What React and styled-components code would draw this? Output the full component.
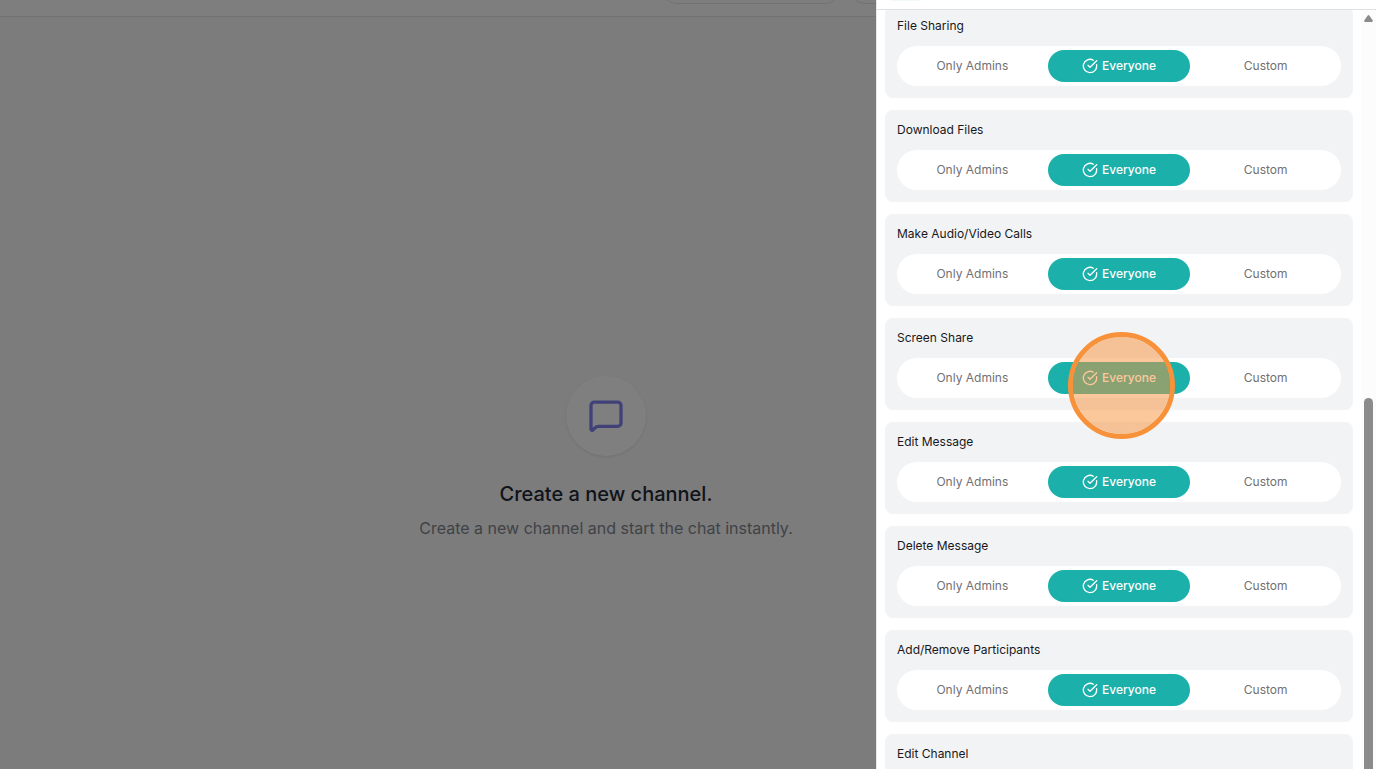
import React, { useState } from "react";
import styled, { createGlobalStyle } from "styled-components";

const GlobalStyle = createGlobalStyle`
  * {
    box-sizing: border-box;
  }
  body {
    margin: 0;
    font-family: Inter, "Liberation Sans", sans-serif;
  }
`;

const Screen = styled.div`
  position: relative;
  height: 100vh;
  overflow: hidden;
  background-color: #f9f9f9;
`;

const TopBar = styled.header`
  display: flex;
  align-items: flex-end;
  gap: 8px;
  height: 17px;
  padding: 0 0 12px 661px;
  border-bottom: 1px solid #e5e5e5;
  background-color: #fdfdfd;
`;

const TopPill = styled.div`
  flex: none;
  width: 180px;
  height: 40px;
  border: 1px solid #e5e5e5;
  border-radius: 16px;
`;

const EmptyState = styled.main`
  display: flex;
  flex-direction: column;
  align-items: center;
  padding: 359px 164px 0 0;
`;

const IconCircle = styled.div`
  display: flex;
  align-items: center;
  justify-content: center;
  width: 80px;
  height: 80px;
  margin-bottom: 24px;
  border-radius: 50%;
  background-color: #ffffff;
  box-shadow: 0 1px 3px rgba(0, 0, 0, 0.1);
  color: #8183f0;
`;

const Title = styled.h1`
  margin: 0 0 8px;
  font-size: 20px;
  line-height: 28px;
  font-weight: 500;
  color: #1f2937;
`;

const Subtitle = styled.p`
  margin: 0;
  font-size: 16px;
  line-height: 24px;
  color: #7f858e;
`;

const Overlay = styled.div`
  position: absolute;
  inset: 0;
  display: flex;
  justify-content: flex-end;
  background-color: rgba(0, 0, 0, 0.5);
`;

const Drawer = styled.aside`
  display: flex;
  flex-direction: column;
  width: 500px;
  max-width: 100%;
  border-left: 1px solid #e5e7eb;
  background-color: #ffffff;
`;

const DrawerHeader = styled.div`
  display: flex;
  align-items: flex-end;
  height: 10px;
  padding: 0 8px 8px;
  border-bottom: 1px solid #e0e0e0;
`;

const Badge = styled.span`
  flex: none;
  width: 40px;
  height: 16px;
  border-radius: 8px;
  background-color: #effcf3;
`;

const DrawerBody = styled.div`
  display: flex;
  flex: 1;
  min-height: 0;
`;

const Viewport = styled.div`
  flex: 1;
  overflow-y: auto;
  scrollbar-width: none;
  padding: 0 8px;
`;

const List = styled.div`
  display: flex;
  flex-direction: column;
  gap: 12px;
  margin-top: -4px;
`;

const Card = styled.section`
  position: relative;
  padding: 12px;
  border-radius: 8px;
  background-color: #f2f3f5;
`;

const CardTitle = styled.h2`
  margin: 0 0 12px;
  font-size: 12px;
  line-height: 16px;
  font-weight: 400;
  color: #18181b;
`;

const Segments = styled.div`
  display: grid;
  grid-template-columns: repeat(3, 1fr);
  gap: 4px;
  padding: 4px;
  border-radius: 20px;
  background-color: #ffffff;
`;

const Segment = styled.button`
  display: flex;
  align-items: center;
  justify-content: center;
  gap: 4px;
  height: 32px;
  padding: 0;
  border: none;
  border-radius: 16px;
  font-family: inherit;
  font-size: 12px;
  line-height: 16px;
  font-weight: ${(props) => (props.$active ? 500 : 400)};
  color: ${(props) => (props.$active ? "#ffffff" : "#717171")};
  background-color: ${(props) => (props.$active ? "#1cb0ab" : "transparent")};
  cursor: pointer;
`;

const ClickMarker = styled.span`
  position: absolute;
  top: 14px;
  left: 183px;
  width: 107px;
  height: 107px;
  border: 5px solid #f8923a;
  border-radius: 50%;
  background-color: rgba(248, 146, 58, 0.5);
  background-clip: padding-box;
  pointer-events: none;
  z-index: 1;
`;

const Scrollbar = styled.div`
  display: flex;
  flex-direction: column;
  align-items: center;
  width: 15px;
  padding-top: 5px;
  background-color: #fcfcfc;
`;

const Thumb = styled.div`
  flex: 1;
  width: 9px;
  margin-top: 376px;
  border-radius: 5px 5px 0 0;
  background-color: #8b8b8b;
`;

const permissions = [
  "File Sharing",
  "Download Files",
  "Make Audio/Video Calls",
  "Screen Share",
  "Edit Message",
  "Delete Message",
  "Add/Remove Participants",
  "Edit Channel",
];

const options = ["Only Admins", "Everyone", "Custom"];

const CheckIcon = () => (
  <svg
    width="16"
    height="16"
    viewBox="0 0 24 24"
    fill="none"
    stroke="currentColor"
    strokeWidth="2"
    strokeLinecap="round"
    strokeLinejoin="round"
    aria-hidden="true"
  >
    <path d="M21.801 10A10 10 0 1 1 17 3.335" />
    <path d="m9 11 3 3L22 4" />
  </svg>
);

const MessageIcon = () => (
  <svg
    width="40"
    height="40"
    viewBox="0 0 40 40"
    fill="none"
    stroke="currentColor"
    strokeWidth="3.3"
    strokeLinecap="round"
    strokeLinejoin="round"
    aria-hidden="true"
  >
    <path d="M35 27a3.300 3.300 0 0 1-3.300 3.300H12a3.300 3.300 0 0 0-2.300 1L6.800 34A1.050 1.050 0 0 1 5 33.300V9.500a3.300 3.300 0 0 1 3.300-3.300h23.400a3.300 3.300 0 0 1 3.300 3.300z" />
  </svg>
);

function PermissionCard({ name, value, onChange, marked }) {
  return (
    <Card>
      <CardTitle>{name}</CardTitle>
      <Segments role="group" aria-label={name}>
        {options.map((option) => (
          <Segment
            key={option}
            type="button"
            $active={option === value}
            aria-pressed={option === value}
            onClick={() => onChange(option)}
          >
            {option === value && <CheckIcon />}
            {option}
          </Segment>
        ))}
      </Segments>
      {marked && <ClickMarker />}
    </Card>
  );
}

function App() {
  const [values, setValues] = useState({});

  const handleChange = (name, option) => {
    setValues({ ...values, [name]: option });
  };

  return (
    <Screen>
      <GlobalStyle />
      <TopBar>
        <TopPill />
        <TopPill />
      </TopBar>
      <EmptyState>
        <IconCircle>
          <MessageIcon />
        </IconCircle>
        <Title>Create a new channel.</Title>
        <Subtitle>Create a new channel and start the chat instantly.</Subtitle>
      </EmptyState>
      <Overlay>
        <Drawer>
          <DrawerHeader>
            <Badge />
          </DrawerHeader>
          <DrawerBody>
            <Viewport>
              <List>
                {permissions.map((name) => (
                  <PermissionCard
                    key={name}
                    name={name}
                    value={values[name] || "Everyone"}
                    onChange={(option) => handleChange(name, option)}
                    marked={name === "Screen Share"}
                  />
                ))}
              </List>
            </Viewport>
            <Scrollbar aria-hidden="true">
              <svg width="9" height="7" viewBox="0 0 9 7" fill="#8b8b8b">
                <path d="M4.500 0 Q5 0 5.500 0.700 L8.800 5.600 Q9 7 7.800 7 H1.200 Q0 7 0.200 5.600 L3.500 0.700 Q4 0 4.500 0z" />
              </svg>
              <Thumb />
            </Scrollbar>
          </DrawerBody>
        </Drawer>
      </Overlay>
    </Screen>
  );
}

export default App;
